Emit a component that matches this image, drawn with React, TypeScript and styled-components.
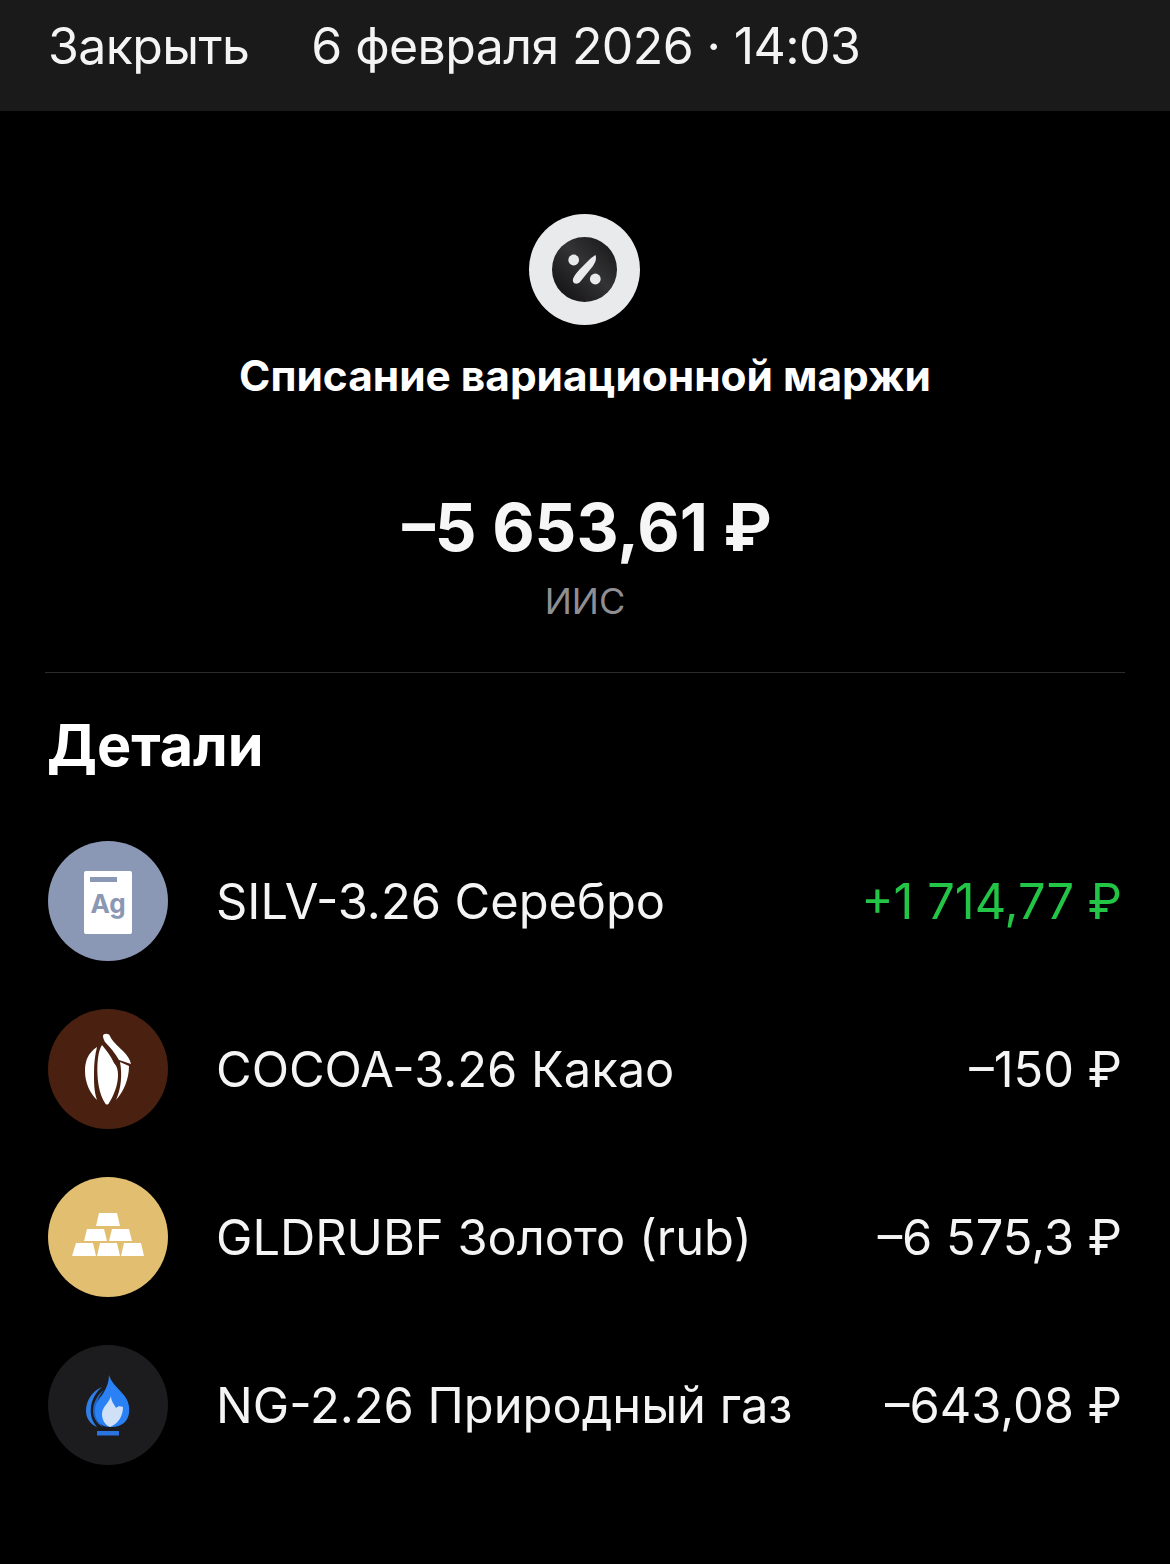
import { createGlobalStyle, styled } from "styled-components";

const GlobalStyle = createGlobalStyle`
  html, body {
    margin: 0;
    padding: 0;
    background: #000;
  }
  body {
    font-family: Inter, "Noto Sans", "Liberation Sans", sans-serif;
    color: #fff;
  }
`;

const Percent = () => (
  <svg width="65" height="65" viewBox="0 0 65 65">
    <defs>
      <linearGradient id="pct" x1="0" y1="1" x2="1" y2="0">
        <stop offset="0" stopColor="#0e0e0f" />
        <stop offset="0.55" stopColor="#333335" />
        <stop offset="1" stopColor="#141415" />
      </linearGradient>
    </defs>
    <circle cx="32.5" cy="32.5" r="32.5" fill="url(#pct)" />
    <circle cx="21.7" cy="23" r="5.4" fill="#e9eaec" />
    <circle cx="43.3" cy="42" r="5.4" fill="#e9eaec" />
    <path
      d="M43.5 18 C45 22 43 26 41 29 L28 45 C25 48 20 47 21 42 C22 39 25 35 28 32 L38 22 C40 20 42 19 43.5 18 Z"
      fill="#e9eaec"
    />
  </svg>
);

const SilverIcon = () => (
  <IconSheet>
    <IconBar />
    <IconLabel>Ag</IconLabel>
  </IconSheet>
);

const CocoaIcon = () => (
  <svg width="46" height="72" viewBox="0 0 46 72" fill="#fff">
    <path d="M18 3 C18 0 24 0 25 3 C27 8 33 13 38 18 C42 22 45 26 46 31 L34 27 C30 20 25 14 20 9 C19 7 18 5 18 3 Z" />
    <path d="M17 12 C13 18 12 30 12.5 42 C13 54 16 64 20 70 C21 72 23 72 24 70 C29 62 33 52 33 42 C33 37 32 33 29 30 C26 23 21 17 17 12 Z" />
    <path d="M12 14 C3 20 0 28 0 38 C0 50 5 60 12 67 C9 58 9 50 9 40 C9 30 10 22 12 14 Z" />
    <path d="M35 29 L44 33 C44 46 39 58 31 67 C36 56 37.5 42 35 29 Z" />
  </svg>
);

const GoldIcon = () => (
  <GoldWrap>
    <svg width="72" height="43" viewBox="0 0 72 43" fill="#fff">
      <path d="M27 0 H45 L48 13 H24 Z" />
      <path d="M15 16 H32 L35 28 H12 Z" />
      <path d="M40 16 H57 L60 28 H37 Z" />
      <path d="M4 30 H21 L24 43 H0 Z" />
      <path d="M28 30 H45 L48 43 H25 Z" />
      <path d="M52 30 H69 L72 43 H49 Z" />
    </svg>
  </GoldWrap>
);

const GasIcon = () => (
  <svg width="44" height="61" viewBox="0 0 44 61">
    <path d="M16 12 C6 16 0 26 0 36 C0 43 4 49 11 52 C6 46 4 40 5 32 C6 24 10 17 16 12 Z" fill="#2f7fe8" />
    <path d="M18 15 C11 20 7 28 7 36 C7 43 11 49 17 52 C12 46 9 40 10 32 C11 25 14 20 18 15 Z" fill="#1f63c4" />
    <path d="M23 0 C25 7 31 12 36 18 C42 24 44 31 43 38 C42 47 34 53 24 52 C15 52 9 46 9 36 C9 26 14 24 18 17 C21 12 23 6 23 0 Z" fill="#2a80f5" />
    <path d="M25 21 C25 26 28 29 30 33 C32 31 34 31 37 32 C37 39 34 48 24 52 C19 50 16 45 16 39 C16 32 23 28 25 21 Z" fill="#cfe0f7" />
    <rect x="11" y="56" width="22" height="4.5" fill="#2a74e0" />
  </svg>
);

const rows = [
  { name: "SILV-3.26 Серебро", amount: "+1 714,77 ₽", bg: "#8a97b5", icon: <SilverIcon />, positive: true },
  { name: "COCOA-3.26 Какао", amount: "–150 ₽", bg: "#4a2110", icon: <CocoaIcon />, positive: false },
  { name: "GLDRUBF Золото (rub)", amount: "–6 575,3 ₽", bg: "#e2be70", icon: <GoldIcon />, positive: false },
  { name: "NG-2.26 Природный газ", amount: "–643,08 ₽", bg: "#1c1c1e", icon: <GasIcon />, positive: false },
];

export default function App() {
  return (
    <Page>
      <GlobalStyle />
      <Header>
        <CloseLabel>Закрыть</CloseLabel>
        <HeaderDate>6 февраля 2026 · 14:03</HeaderDate>
      </Header>
      <Hero>
        <HeroBadge>
          <Percent />
        </HeroBadge>
        <HeroTitle>Списание вариационной маржи</HeroTitle>
        <HeroAmount>–5 653,61 ₽</HeroAmount>
        <HeroAccount>ИИС</HeroAccount>
      </Hero>
      <Divider />
      <SectionTitle>Детали</SectionTitle>
      <List>
        {rows.map((row) => (
          <Row key={row.name}>
            <RowIcon $bg={row.bg}>{row.icon}</RowIcon>
            <RowName>{row.name}</RowName>
            <RowAmount $positive={row.positive}>{row.amount}</RowAmount>
          </Row>
        ))}
      </List>
    </Page>
  );
}

const Page = styled.div`
  width: 1170px;
  height: 1564px;
  background: #000;
  overflow: hidden;
`;
const Header = styled.header`
  height: 111px;
  background: #1a1a1b;
  display: flex;
  align-items: center;
  gap: 62px;
  padding: 0 0 19px 48px;
  box-sizing: border-box;
  font-size: 50px;
  font-weight: 400;
  letter-spacing: -0.6px;
  color: #f4f4f4;
`;
const CloseLabel = styled.span``;
const HeaderDate = styled.span``;
const Hero = styled.section`
  display: flex;
  flex-direction: column;
  align-items: center;
  padding-top: 103px;
`;
const HeroBadge = styled.div`
  width: 111px;
  height: 111px;
  margin-right: 1px;
  border-radius: 50%;
  background: #e9eaec;
  display: flex;
  align-items: center;
  justify-content: center;
`;
const HeroTitle = styled.h1`
  margin: 26px 0 0;
  font-size: 42.4px;
  line-height: 50px;
  font-weight: 700;
`;
const HeroAmount = styled.div`
  margin-top: 87px;
  padding-left: 4px;
  font-size: 65.4px;
  line-height: 80px;
  font-weight: 700;
  color: #f6f6f6;
`;
const HeroAccount = styled.div`
  margin-top: 10px;
  font-size: 36px;
  line-height: 46px;
  color: #8e8e93;
`;
const Divider = styled.div`
  height: 1px;
  margin: 48px 45px 0;
  background: #2c2c2e;
`;
const SectionTitle = styled.h2`
  margin: 36px 0 0 47px;
  font-size: 57.5px;
  line-height: 72px;
  font-weight: 700;
`;
const List = styled.div`
  display: flex;
  flex-direction: column;
  gap: 48px;
  margin-top: 60px;
  padding: 0 48px;
`;
const Row = styled.div`
  display: flex;
  align-items: center;
  height: 120px;
`;
const RowIcon = styled.div<{ $bg: string }>`
  flex: none;
  width: 120px;
  height: 120px;
  border-radius: 50%;
  background: ${(p) => p.$bg};
  display: flex;
  align-items: center;
  justify-content: center;
`;
const RowName = styled.div`
  margin-left: 48px;
  flex: 1;
  font-size: 48.8px;
  font-weight: 400;
  color: #f4f4f4;
`;
const RowAmount = styled.div<{ $positive: boolean }>`
  font-size: 48.8px;
  font-weight: 400;
  color: ${(p) => (p.$positive ? "#22c545" : "#f4f4f4")};
`;
const IconSheet = styled.div`
  width: 48px;
  height: 63px;
  border-radius: 2px;
  background: #fff;
  box-sizing: border-box;
  padding: 6px 6px 0;
  margin-top: 2px;
  display: flex;
  flex-direction: column;
`;
const IconBar = styled.div`
  width: 27px;
  height: 5px;
  background: #8a97b5;
`;
const IconLabel = styled.div`
  margin-top: 6px;
  font-size: 26px;
  line-height: 32px;
  font-weight: 700;
  color: #8a97b5;
  text-align: center;
`;
const GoldWrap = styled.div`
  display: flex;
  margin-bottom: 6px;
`;
